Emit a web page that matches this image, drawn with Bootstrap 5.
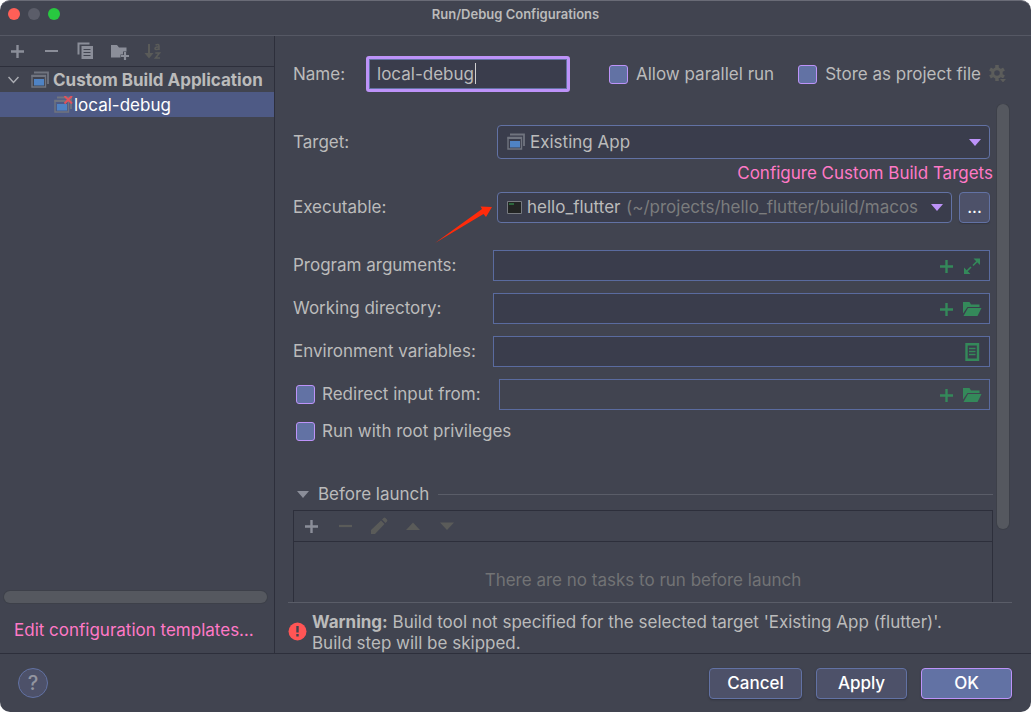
<!DOCTYPE html>
<html lang="en">
<head>
<meta charset="utf-8">
<meta name="viewport" content="width=device-width, initial-scale=1">
<title>Run/Debug Configurations</title>
<link href="https://cdn.jsdelivr.net/npm/bootstrap@5.3.0/dist/css/bootstrap.min.css" rel="stylesheet">
<style>
:root{--bg:#414450;--field:#3a3d4c;--line:#2d2f3b;--soft:#5a5d68;--blue:#6272a4;--violet:#bd93f9;--pink:#ff79c6;--green:#34895a;--ink:#bbbbbb;--grey:#8b8e99;--off:#5a5b59}
body{font:17px/21px Inter,"Liberation Sans",sans-serif;font-optical-sizing:none;color:var(--ink);background:#fff}
.window{height:100vh;background:var(--bg);border-radius:10px;border-top:1px solid #696b76}
.titlebar{height:35px;border-bottom:1px solid #555864;font-size:13px;font-weight:600;padding-bottom:8px}
.lights{left:8px;top:7px;gap:8px}
.lights span{width:12px;height:12px;border-radius:50%}
.light-close{background:#ff5f57}
.light-min{background:#5b5d69}
.light-zoom{background:#28c840}
.sidebar{width:275px;border-right:1px solid var(--line)}
.tools{height:31px;border-bottom:1px solid var(--line)}
.tools button,.field button,.plain-btn{border:0;background:none;padding:0;display:flex;color:inherit}
.side-tools{padding-left:8px;gap:16px;color:var(--grey)}
.tree-row{height:25px;white-space:nowrap;overflow:hidden;padding-top:1px}
.tree-row.parent{padding-left:8px;gap:4px}
.tree-row.parent .chevron{margin-right:8px}
.tree-row.selected{background:#4e5a85;color:#fff;padding-left:54px}
.thumb{background:#55585f;border-radius:6px;box-shadow:0 0 0 1px #3d4049}
.thumb-x{height:12px;margin:0 7px 0 4px}
.thumb-y{width:12px;height:425px;margin-right:22px}
a.pink{color:var(--pink);text-decoration:none}
.side-foot{height:50px;padding:17px 0 0 14px}
.name-row{height:68px;padding:16px 24px 8px 18px}
.name-row label{padding-top:1px}
.name-input{width:204px;height:36px;border:3px solid var(--violet);box-shadow:inset 0 0 0 1px var(--blue);border-radius:3px;background:var(--field);color:var(--ink);padding:0 8px;outline:0}
.name-box{margin-left:21px}
.text-caret{left:109px;top:7px;width:1px;height:21px;background:#d0d0d0}
.form-check-input.box{width:19px;height:19px;margin:0;border:1px solid var(--violet);border-radius:3px;background-color:var(--blue);flex:none}
.scroll-area{padding-left:18px;min-height:0}
.form-side{padding-top:21px}
.form-row{display:flex;align-items:center;padding-right:3px;margin-bottom:12px}
.form-row>label:first-child{width:200px;flex:none}
.redirect{width:206px;padding-left:3px;gap:7px;flex:none;white-space:nowrap}
.combo{border:1px solid var(--blue);border-radius:4px;background:var(--field);height:31px;margin-left:4px;padding:0 8px 0 9px;min-width:0}
.combo.tall{height:34px}
.combo select{appearance:none;border:0;background:none;color:var(--ink);padding:0;outline:0}
.combo select option{color:#222}
.path-hint{color:#7b7c7d;white-space:nowrap;overflow:hidden;min-width:0;flex:1;margin:0 8px 0 5px}
.more{width:31px;height:31px;border:1px solid var(--blue);border-radius:4px;background:#4d5169;color:#fff;margin-left:7px;padding:0;box-shadow:0 1px 1px #353742;flex:none}
.field{height:31px;border:1px solid #5a6b9f;background:var(--field);color:var(--green);padding-right:7px;gap:7px;min-width:0}
.field input{background:none;border:0;outline:0;min-width:0;color:var(--ink)}
.field.off{background:none}
.pointer{left:140px;top:12px}
.target-link{height:24px;margin:-10px 0 7px}
.exec{margin-bottom:27px}
.check-row{height:24px;margin-top:-3px;padding-left:3px;gap:7px}
.group-head{height:24px;margin-top:39px;padding-left:4px;gap:9px}
.rule{height:1px;background:var(--soft)}
.tasks{border:1px solid var(--line);margin-top:4px}
.task-tools{padding-left:8px;gap:16px;color:var(--off)}
.task-tools .live{color:var(--grey)}
.no-tasks{height:76px;color:#727375}
.warning{border-top:1px solid var(--soft);margin:0 19px 0 13px;padding-top:9px;gap:5px;height:51px}
.warning svg{margin-top:10px}
.footer-bar{height:59px;border-top:1px solid var(--line);padding:0 19px 0 18px;gap:14px}
.action{height:31px;border:1px solid var(--blue);border-radius:4px;background:#4d5169;color:#fff;box-shadow:0 1px 2px #31333e;padding:1px 0 0;width:91px;font-weight:500}
.action.wide{width:93px}
.action.main{background:var(--blue);border-color:var(--violet)}
.help{width:30px;height:30px;border:1px solid var(--blue);border-radius:50%;background:#4d5169;color:#9295a0;font-size:20px;font-weight:500;padding:0}
svg{flex:none;display:block}
</style>
</head>
<body>
<svg class="d-none" xmlns="http://www.w3.org/2000/svg">
  <symbol id="plus" viewBox="0 0 18 18"><path d="M9.500 3v13M3 9.500h13" stroke="currentColor" stroke-width="2.400" fill="none"/></symbol>
  <symbol id="minus" viewBox="0 0 18 18"><path d="M3 9h13" stroke="currentColor" stroke-width="2.200"/></symbol>
  <symbol id="app" viewBox="0 0 18 18"><path d="M3 1.500h14V13" stroke="#70747f" stroke-width="1.800" fill="none"/><path d="M1 4.500h13.500v11.500H1z" stroke="#70747f" fill="none" stroke-width="1.400"/><path d="M.5 5h14.500" stroke="#70747f" stroke-width="2"/><path d="M3 8h10v6.500H3z" fill="#4f83c4"/></symbol>
  <symbol id="folder" viewBox="0 0 20 18"><path d="M1 2h6.500L9 4.500h8.500V7H5.500L1 13.500z" fill="currentColor"/><path d="M6 8h13.500l-4 8H1.500z" fill="currentColor"/></symbol>
</svg>

<div class="window d-flex flex-column overflow-hidden">
  <header class="titlebar position-relative d-flex align-items-center justify-content-center flex-shrink-0">
    <div class="lights position-absolute d-flex">
      <span class="light-close"></span><span class="light-min"></span><span class="light-zoom"></span>
    </div>
    Run/Debug Configurations
  </header>

  <div class="d-flex flex-grow-1 overflow-hidden">
    <aside class="sidebar d-flex flex-column flex-shrink-0">
      <div class="tools side-tools d-flex align-items-center">
        <button aria-label="Add"><svg width="18" height="18"><use href="#plus"/></svg></button>
        <button aria-label="Remove"><svg width="18" height="18"><use href="#minus"/></svg></button>
        <button aria-label="Copy"><svg width="18" height="18" viewBox="0 0 18 18"><path d="M2.500 12.500V1.500h11" stroke="currentColor" stroke-width="2" fill="none"/><path d="M5.500 4h11.500v13H5.500z" fill="currentColor"/><path d="M7.500 7.500h7M7.500 10.500h7M7.500 13.500h7" stroke="#414450"/></svg></button>
        <button aria-label="New folder"><svg width="18" height="18" viewBox="0 0 18 18" overflow="visible"><path d="M1 3h6l2 2.500h7.500V9.500h-3.500v3h-2.500v3H1z" fill="currentColor"/><path d="M15 10v8M11 14h8" stroke="currentColor" stroke-width="2.200"/></svg></button>
        <button aria-label="Sort" disabled><svg width="18" height="18" viewBox="0 0 18 18" fill="none" stroke="#5a5b59"><path d="M5 2v12" stroke-width="2"/><path d="M.5 11h9L5 16.500z" fill="#5a5b59" stroke="none"/><path d="M11.500 3q3.500-1.500 3.500 1V8M15 5h-2q-2 .2-2 1.500T13 7.500 15 6M11.300 11h4.200l-4 5h4.500" stroke-width="1.600"/></svg></button>
      </div>
      <div class="tree-row parent d-flex align-items-center fw-bold">
        <svg class="chevron" width="11" height="8" viewBox="0 0 11 8"><path d="M.5 1l5 5.500 5-5.500" fill="none" stroke="#aaacb2" stroke-width="1.500"/></svg>
        <svg width="18" height="18"><use href="#app"/></svg>
        <span>Custom Build Application</span>
      </div>
      <div class="tree-row selected d-flex align-items-center">
        <svg width="20" height="18" viewBox="0 0 20 18"><use href="#app" width="18" height="18"/><path d="M10.500 0l7.500 7.500M18 0l-7.500 7.500" stroke="#e0525c" stroke-width="2"/></svg>
        <span>local-debug</span>
      </div>
      <div class="flex-grow-1"></div>
      <div class="thumb thumb-x"></div>
      <div class="side-foot"><a class="pink" href="#">Edit configuration templates…</a></div>
    </aside>

    <main class="d-flex flex-column flex-grow-1 overflow-hidden">
      <div class="name-row d-flex align-items-center flex-shrink-0">
        <label for="name">Name:</label>
        <div class="name-box position-relative"><input class="name-input" id="name" value="local-debug"><span class="text-caret position-absolute"></span></div>
        <div class="d-flex align-items-center gap-2 ms-auto">
          <input class="form-check-input box" type="checkbox" id="parallel"><label for="parallel">Allow parallel run</label>
        </div>
        <div class="d-flex align-items-center gap-2 ms-4">
          <input class="form-check-input box" type="checkbox" id="store"><label for="store">Store as project file</label>
        </div>
        <button class="plain-btn ms-2" aria-label="Storage options" disabled><svg width="18" height="18" viewBox="0 0 18 18"><circle cx="8" cy="8" r="4.300" fill="none" stroke="#5c5d5b" stroke-width="3"/><path d="M8 0v3M8 13v3M1 4l2.500 1.500M12.500 10.500L15 12M1 12l2.500-1.500M12.500 5.500L15 4" stroke="#5c5d5b" stroke-width="3.500"/><path d="M10 13.500h8l-4 4.500z" fill="#5c5d5b" stroke="#414450"/></svg></button>
      </div>

      <div class="scroll-area d-flex flex-grow-1 overflow-hidden">
        <div class="form-side flex-grow-1 overflow-hidden">
          <div class="form-row">
            <label for="target">Target:</label>
            <div class="combo tall d-flex align-items-center flex-grow-1">
              <svg class="me-1" width="19" height="18"><use href="#app" width="18" height="18"/></svg>
              <select id="target" class="flex-grow-1"><option>Existing App</option></select>
              <svg width="12" height="7" viewBox="0 0 12 7"><path d="M0 0h12L6 7z" fill="#bd93f9"/></svg>
            </div>
          </div>
          <div class="target-link d-flex align-items-center justify-content-end"><a class="pink" href="#">Configure Custom Build Targets</a></div>
          <div class="form-row exec position-relative">
            <label for="exe">Executable:</label>
            <div class="combo d-flex align-items-center flex-grow-1">
              <svg class="me-1" width="16" height="14" viewBox="0 0 16 14"><path d="M.5.5h14v12H.5z" fill="#222423" stroke="#777a80"/><path d="M2 3h5" stroke="#2f7d46" stroke-width="1.500"/></svg>
              <select id="exe"><option>hello_flutter</option></select>
              <span class="path-hint">(~/projects/hello_flutter/build/macos</span>
              <svg width="12" height="7" viewBox="0 0 12 7"><path d="M0 0h12L6 7z" fill="#bd93f9"/></svg>
            </div>
            <button class="more" aria-label="Browse executable">...</button>
            <svg class="pointer position-absolute" width="62" height="42" viewBox="0 0 62 42"><path d="M2 39L49 5 47.500 2.500 59 3 53 13 50.500 10z" fill="#ff2b0a"/></svg>
          </div>
          <div class="form-row">
            <label for="args">Program arguments:</label>
            <div class="field d-flex align-items-center flex-grow-1">
              <input id="args" class="flex-grow-1">
              <button aria-label="Insert macro"><svg width="18" height="18"><use href="#plus"/></svg></button>
              <button aria-label="Expand"><svg width="20" height="18" viewBox="0 0 20 18"><path d="M11.500 1.500H18V8zM2 10.500V17h6.500z" fill="currentColor"/><path d="M11 8.500l5-5M4 15l5-5" stroke="currentColor" stroke-width="1.600"/></svg></button>
            </div>
          </div>
          <div class="form-row">
            <label for="cwd">Working directory:</label>
            <div class="field d-flex align-items-center flex-grow-1">
              <input id="cwd" class="flex-grow-1">
              <button aria-label="Insert macro"><svg width="18" height="18"><use href="#plus"/></svg></button>
              <button aria-label="Browse"><svg width="20" height="18"><use href="#folder"/></svg></button>
            </div>
          </div>
          <div class="form-row">
            <label for="env">Environment variables:</label>
            <div class="field d-flex align-items-center flex-grow-1">
              <input id="env" class="flex-grow-1">
              <button aria-label="Edit variables"><svg width="20" height="18" viewBox="0 0 20 18"><path d="M4.500 1.200h11.500v15.600H4.500z" fill="none" stroke="currentColor" stroke-width="2.400"/><path d="M7 5.500h6.500M7 8.500h6.500M7 11.500h6.500" stroke="currentColor" stroke-width="1.300"/></svg></button>
            </div>
          </div>
          <div class="form-row">
            <div class="redirect d-flex align-items-center">
              <input class="form-check-input box" type="checkbox" id="redir"><label for="redir">Redirect input from:</label>
            </div>
            <div class="field off d-flex align-items-center flex-grow-1">
              <input class="flex-grow-1" aria-label="Input file">
              <button aria-label="Insert macro"><svg width="18" height="18"><use href="#plus"/></svg></button>
              <button aria-label="Browse"><svg width="20" height="18"><use href="#folder"/></svg></button>
            </div>
          </div>
          <div class="check-row d-flex align-items-center">
            <input class="form-check-input box" type="checkbox" id="root"><label for="root">Run with root privileges</label>
          </div>
          <div class="group-head d-flex align-items-center">
            <svg width="12" height="7" viewBox="0 0 12 7"><path d="M0 0h12L6 7z" fill="#8b8e99"/></svg>
            <span>Before launch</span>
            <div class="rule flex-grow-1"></div>
          </div>
          <div class="tasks">
            <div class="tools task-tools d-flex align-items-center">
              <button class="live" aria-label="Add task"><svg width="18" height="18"><use href="#plus"/></svg></button>
              <button aria-label="Remove task" disabled><svg width="18" height="18"><use href="#minus"/></svg></button>
              <button aria-label="Edit task" disabled><svg width="18" height="18" viewBox="0 0 18 18"><path d="M1 17v-4L11 3.500 14.500 7 5 17zM12 2.500L13.500 1q1-.8 2 0l1.500 1.500q.8 1 0 2L15.500 6z" fill="currentColor"/></svg></button>
              <button aria-label="Move up" disabled><svg width="18" height="18" viewBox="0 0 18 18"><path d="M2 13h14L9 5.500z" fill="currentColor"/></svg></button>
              <button aria-label="Move down" disabled><svg width="18" height="18" viewBox="0 0 18 18"><path d="M2 5.500h14L9 13z" fill="currentColor"/></svg></button>
            </div>
            <div class="no-tasks d-flex align-items-center justify-content-center">There are no tasks to run before launch</div>
          </div>
        </div>
        <div class="thumb thumb-y flex-shrink-0 ms-1"></div>
      </div>

      <div class="warning d-flex align-items-start flex-shrink-0">
        <svg width="19" height="19" viewBox="0 0 19 19"><circle cx="9.500" cy="9.500" r="9" fill="#ff5555"/><path d="M9.500 4v6.500M9.500 12v2.500" stroke="#414450" stroke-width="2.400"/></svg>
        <div><b>Warning:</b> Build tool not specified for the selected target 'Existing App (flutter)'.<br>Build step will be skipped.</div>
      </div>
    </main>
  </div>

  <footer class="footer-bar d-flex align-items-center flex-shrink-0">
    <button class="help me-auto" aria-label="Help">?</button>
    <button class="action wide">Cancel</button>
    <button class="action">Apply</button>
    <button class="action main">OK</button>
  </footer>
</div>
<script src="https://cdn.jsdelivr.net/npm/bootstrap@5.3.0/dist/js/bootstrap.bundle.min.js"></script>
</body>
</html>
